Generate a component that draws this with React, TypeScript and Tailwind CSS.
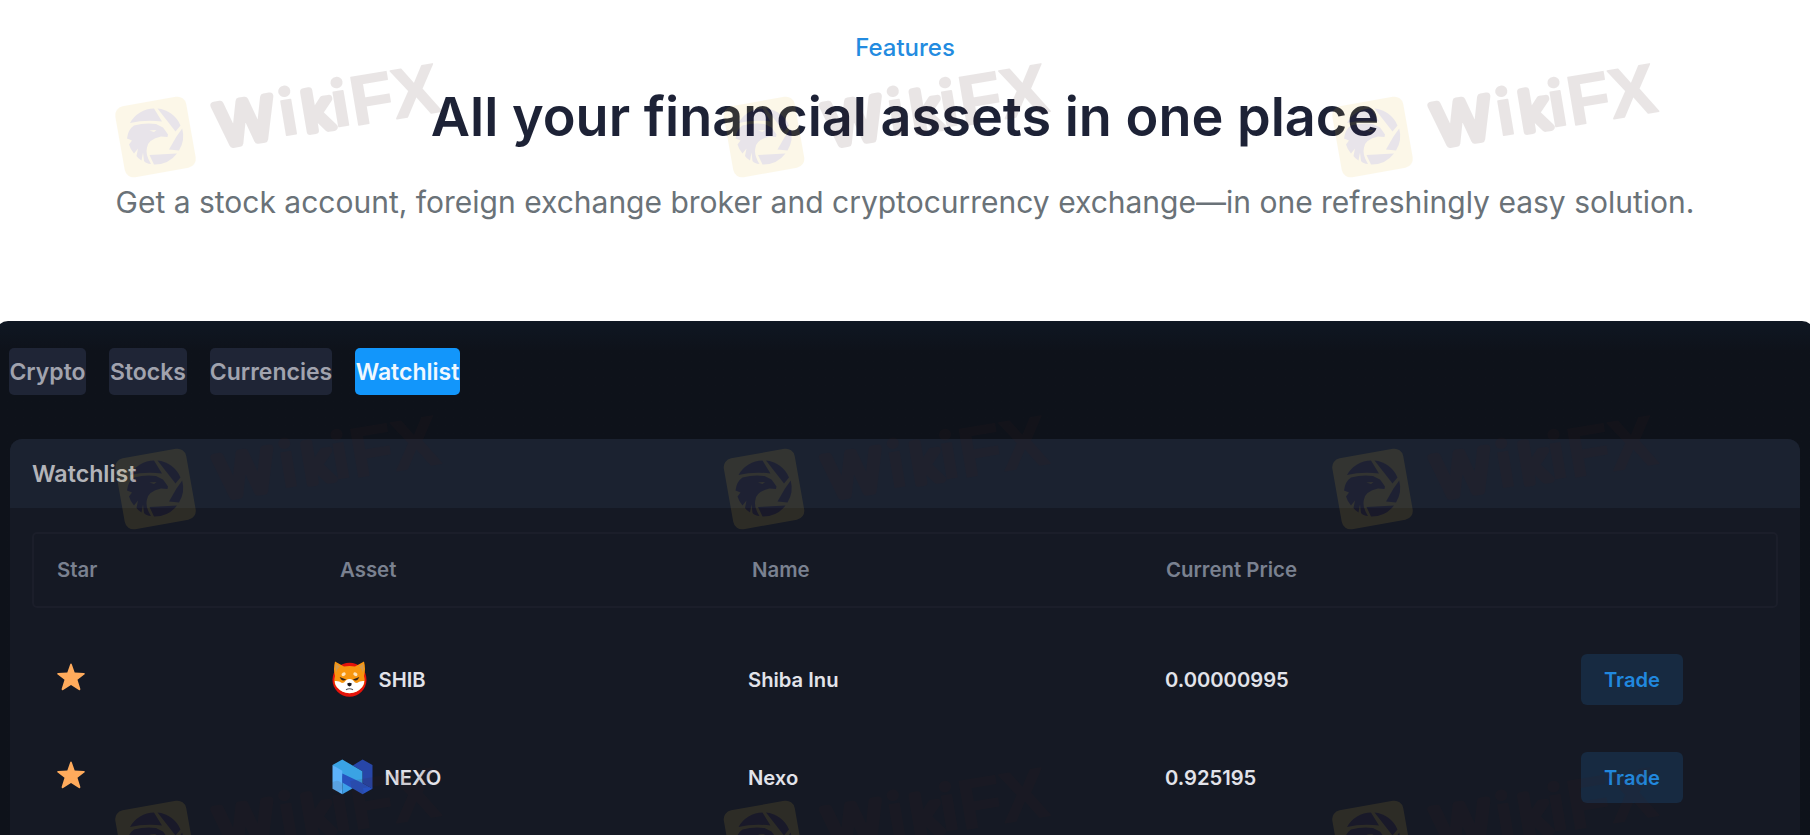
import type { ReactNode } from "react";

function Star() {
  return (
    <svg viewBox="0 0 28 28" className="h-7 w-7" fill="#ffab5c">
      <path d="M14 0.6 Q14.6 0.6 14.9 1.5 L17.7 9.6 L26.8 10 Q28.6 10.3 27.3 11.5 L20.5 16.8 L23.3 25.8 Q23.5 27.7 21.8 27 L14 22 L6.2 27 Q4.5 27.7 4.7 25.8 L7.5 16.8 L0.7 11.5 Q-0.6 10.3 1.2 10 L10.3 9.6 L13.1 1.5 Q13.4 0.6 14 0.6 Z" />
    </svg>
  );
}

function ShibIcon() {
  return (
    <svg viewBox="0 0 35 36" className="h-9 w-[35px]">
      <circle cx="17.5" cy="18.8" r="17" fill="#e5130b" />
      <path
        d="M3 0.5 L12 5.6 Q17.5 4.6 23 5.6 L32 0.5 Q34 8 32 15 Q34 22 30.5 26 Q25 32 17.5 32.2 Q10 32 4.5 26 Q1 22 3 15 Q1 8 3 0.5 Z"
        fill="#f8960f"
      />
      <path d="M3.8 2.8 L8 5.6 Q5 8 4 11.5 Q3 7 3.8 2.8 Z M31.2 2.8 L27 5.6 Q30 8 31 11.5 Q32 7 31.2 2.8 Z" fill="#d59a4c" />
      <path
        d="M2.8 20 Q7 19.6 10 22 Q12.2 22 13.8 19.4 Q17.5 16.6 21.2 19.4 Q22.8 22 25 22 Q28 19.6 32.2 20 Q32.4 23.5 30 26.2 Q25 32 17.5 32.2 Q10 32 5 26.2 Q2.6 23.5 2.8 20 Z"
        fill="#fff"
      />
      <ellipse cx="11.6" cy="13.2" rx="2.2" ry="1.7" transform="rotate(-30 11.6 13.2)" fill="#ffe3b8" />
      <ellipse cx="23.4" cy="13.2" rx="2.2" ry="1.7" transform="rotate(30 23.4 13.2)" fill="#ffe3b8" />
      <path d="M7.6 16 L14.2 18.6 Q11 20.4 9.2 18.6 Z M27.4 16 L20.8 18.6 Q24 20.4 25.8 18.6 Z" fill="#33241c" />
      <path d="M15.2 22.6 Q17.5 20.8 19.8 22.6 Q19.8 25 17.5 25.4 Q15.2 25 15.2 22.6 Z" fill="#15151c" />
      <path d="M14 28.8 Q17.5 26.8 21 28.8" fill="none" stroke="#55555c" strokeWidth="1.1" />
    </svg>
  );
}

function NexoIcon() {
  return (
    <svg viewBox="0 0 41 36" className="h-9 w-[41px]">
      <path d="M30.6 0.5 L40.5 6 V29.7 L30.4 24 V12.2 L20.8 6.4 Z" fill="#2746a8" />
      <path d="M0.5 6 L10.3 0.5 L30.4 12.2 V26 L10.3 17 L9 14 Z" fill="#3aa3e4" />
      <path d="M0.5 6 L10.3 11.8 V35.2 L0.5 29.7 Z" fill="#5db2fa" />
      <path d="M10.3 16 V35.2 L20.5 29.5 V22 Z" fill="#3d9fe8" />
      <path d="M10.3 14.5 L30.4 24 L40.5 29.7 L30.6 35.2 L10.3 23.6 Z" fill="#2752c0" />
    </svg>
  );
}

const marks = [0, 1, 2].flatMap((row) => [0, 1, 2].map((col) => ({ x: col * 608.5, y: row * 352 })));

function Watermarks() {
  return (
    <svg className="pointer-events-none absolute inset-0" width="1810" height="835" viewBox="0 0 1810 835">
      {marks.map((m) => (
        <g key={`${m.x}-${m.y}`} transform={`translate(${m.x} ${m.y})`}>
          <g opacity=".115" transform="translate(155.5 137)">
            <rect x="-36" y="-36" width="72" height="72" rx="9" fill="#e8c03c" transform="rotate(-10)" />
            <g fill="#3c1c50" transform="translate(-.5 -.5)">
              <path d="M-25 -13.5 A28 28 0 0 1 -1 -28 L7 -15 Q-10 -17 -25 -13.5 Z" />
              <path d="M2.5 -28 A28 28 0 0 1 25.5 -11 L20.5 -5 Z" />
              <path d="M27.2 -8 A28 28 0 0 1 24 14 L14 13 L21.5 0 Z" />
              <path d="M22 17 A28 28 0 0 1 -1 28 L-5.5 18.5 Z" />
              <path d="M-28 2 Q-27 -7 -21 -11 Q-10 -14 1 -12.5 L8 -9 Q11 -5 13 -2 L12.5 .5 L6 0 Q-7 3 -8 11 Q-10 18 -4 27.5 Q-9 27 -11 24.5 L-12 16 L-13.5 24 Q-17 22 -18.5 19.5 L-17 12 L-21 17 Q-25 12 -26 8 L-23 4 Z" />
            </g>
            <path d="M-6 -6.5 L1 -7 L-1.5 -5 Z" fill="#e8c03c" />
          </g>
          <text
            transform="translate(210 151) rotate(-9.5)"
            className="font-['Liberation_Sans'] text-[60px]"
            fill="#40201e"
            stroke="#40201e"
            strokeWidth="7.5"
            strokeLinejoin="round"
            opacity=".11"
            x="11.5 74.5 98.5 127.5 146.5 189"
            y="-3"
          >
            W
            <tspan className="font-['Inter'] text-[63px] font-bold" strokeWidth="2">
              i
            </tspan>
            <tspan className="text-[55px]">k</tspan>
            <tspan className="font-['Inter'] text-[63px] font-bold" strokeWidth="2">
              i
            </tspan>
            <tspan className="text-[70px] font-bold" strokeWidth="1.5" dy="2">
              FX
            </tspan>
          </text>
        </g>
      ))}
    </svg>
  );
}

const tabs = ["Crypto", "Stocks", "Currencies", "Watchlist"];
const tabWidths = ["w-[77px]", "w-[78px]", "w-[122px]", "w-[105px]"];

const assets: { symbol: string; name: string; price: string; icon: ReactNode }[] = [
  { symbol: "SHIB", name: "Shiba Inu", price: "0.00000995", icon: <ShibIcon /> },
  { symbol: "NEXO", name: "Nexo", price: "0.925195", icon: <NexoIcon /> },
];

export default function App() {
  return (
    <div className="relative h-[835px] w-[1810px] overflow-hidden bg-white font-['Inter',sans-serif]">
      <header className="flex flex-col items-center pt-8 text-center whitespace-nowrap">
        <p className="text-2xl leading-8 font-medium text-[#238be0]">Features</p>
        <h1 className="mt-[21px] text-[54px] leading-[64px] font-semibold text-[#1d2236]">All your financial assets in one place</h1>
        <p className="mt-[33px] text-[30px] leading-10 text-[#6a7278]">
          Get a stock account, foreign exchange broker and cryptocurrency exchange—in one refreshingly easy solution.
        </p>
      </header>

      <main className="-mx-1 mt-[99px] h-[514px] rounded-t-[12px] bg-[#0e131b] bg-linear-to-b from-[#0f1723] to-[#0e121a] to-[30px] px-[13px] pt-[27px]">
        <nav className="flex gap-[23px]">
          {tabs.map((tab, i) => (
            <button
              key={tab}
              className={`${tabWidths[i]} flex h-[47px] items-center justify-center rounded-[5px] pt-px text-[23px] font-semibold ${
                tab === "Watchlist" ? "bg-[#1296fb] text-[#f0f8ff]" : "bg-[#1f2536] text-[#a1a3ae]"
              }`}
            >
              {tab}
            </button>
          ))}
        </nav>

        <section className="mt-[44px] ml-px h-[420px] w-[1790px] overflow-hidden rounded-t-[12px] bg-[#151924]">
          <h2 className="flex h-[69px] items-center bg-[#1b2230] pt-px pl-[22px] text-[23.2px] font-semibold text-[#b3b4b9]">Watchlist</h2>
          <div className="px-[22px] pt-[24px]">
            <div className="grid h-[76px] w-[1746px] grid-cols-[283px_412px_414px_1fr] items-center rounded-[5px] border-2 border-[#1b1e2a] pt-px pl-[23px] text-[20.4px] font-semibold text-[#7a8190]">
              <span>Star</span>
              <span>Asset</span>
              <span>Name</span>
              <span>Current Price</span>
            </div>
            <div className="pt-[22px]">
              {assets.map((asset) => (
                <div
                  key={asset.symbol}
                  className="grid h-[98px] grid-cols-[275px_416px_417px_416px_1fr] items-center pl-[25px] text-[20.2px] font-semibold text-[#e2e3ea]"
                >
                  <span className="pb-[4px]">
                    <Star />
                  </span>
                  <span className="flex items-center gap-[11.5px]">
                    {asset.icon}
                    <span className="pt-[2px]">{asset.symbol}</span>
                  </span>
                  <span className="pt-[2px]">{asset.name}</span>
                  <span className="pt-[2px]">{asset.price}</span>
                  <button className="h-[51px] w-[102px] rounded-[6px] bg-[#172a41] pt-[2px] text-[#2188de]">Trade</button>
                </div>
              ))}
            </div>
          </div>
        </section>
      </main>
      <Watermarks />
    </div>
  );
}
